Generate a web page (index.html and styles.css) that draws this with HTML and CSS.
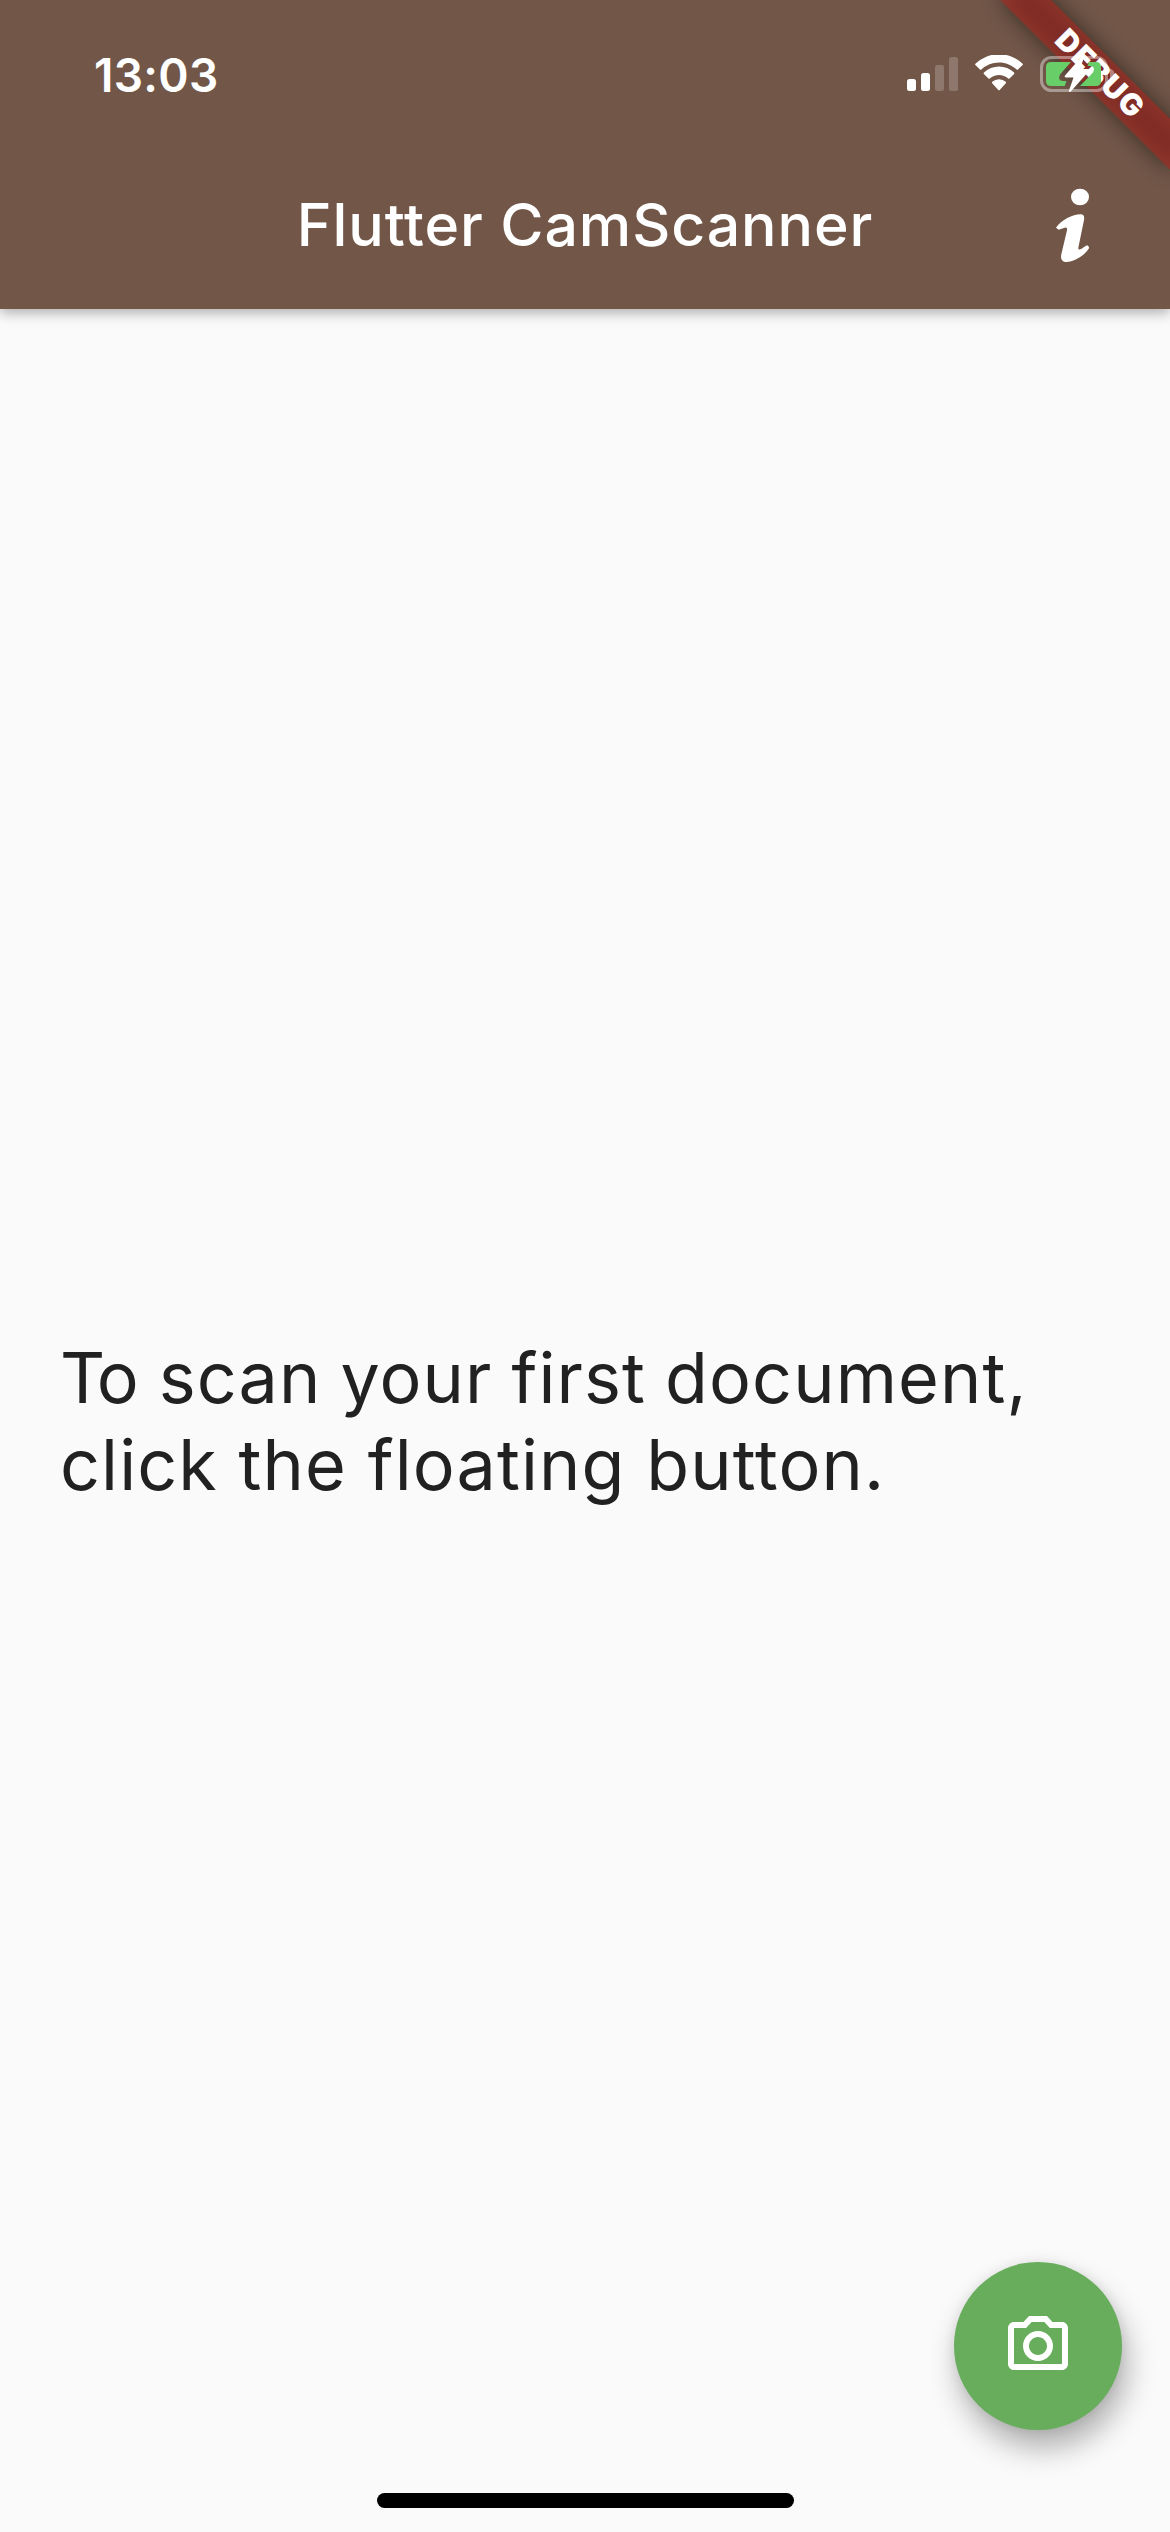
FILE: index.html
```html
<!DOCTYPE html>
<html lang="en">
<head>
<meta charset="utf-8">
<title>Flutter CamScanner</title>
<link rel="stylesheet" href="styles.css">
</head>
<body>
<div class="app">
  <header class="app-bar">
    <div class="status-bar">
      <time class="clock">13:03</time>
      <div class="status-icons">
        <svg class="signal" width="51" height="34" viewBox="0 0 51 34">
          <rect x="0" y="22" width="9" height="12" rx="2.5"/>
          <rect x="14" y="16" width="9" height="18" rx="2.5"/>
          <rect class="dim" x="28" y="8" width="9" height="26" rx="2.5"/>
          <rect class="dim" x="42" y="0" width="9" height="34" rx="2.5"/>
        </svg>
        <svg class="wifi" width="50" height="36" viewBox="0 0 50 36">
          <path d="M25 7.500c6.800 0 13 2.700 17.700 7.100.4.400.9.400 1.300 0l4.600-4.500c.4-.4.4-1 0-1.400A34 34 0 0 0 1.400 8.700c-.4.4-.4 1 0 1.400L6 14.600c.4.400.9.400 1.300 0A26 26 0 0 1 25 7.500Z"/>
          <path d="M25 20c3.500 0 6.700 1.300 9.200 3.500.4.400.9.400 1.300 0l4.600-4.600c.4-.4.4-1 0-1.400a22 22 0 0 0-30.200 0c-.4.4-.4 1 0 1.400l4.600 4.600c.4.400.9.400 1.300 0A14 14 0 0 1 25 20Z"/>
          <path d="M31.800 28.200c.4-.4.4-1 0-1.400a10.500 10.500 0 0 0-13.600 0c-.4.400-.4 1 0 1.400l6.100 6.700c.4.400 1 .400 1.400 0Z"/>
        </svg>
        <svg class="battery" width="76" height="40" viewBox="0 0 76 40">
          <rect class="shell" x="1.500" y="3.500" width="65" height="33" rx="10"/>
          <path class="cap" d="M70 14.500c3 1 4.500 3 4.500 5.500s-1.500 4.500-4.500 5.500Z"/>
          <path class="charge" d="M11 8H31L20 20.500q-3 6.500 3 6.500h3.500l-1.800 5H11q-5 0-5-5V13q0-5 5-5ZM49 8h7q5 0 5 5v14q0 5-5 5H40L53 18.500q3-6.500-3-6.500h-2.500Z"/>
          <path class="bolt" d="M43 1 25 21.500q-1 2 1 2h7.500L29 36.500q0 2.500 1.800 1L49 17q1-2-1-2h-8L44.500 2q0-2.200-1.500-1Z"/>
        </svg>
      </div>
    </div>
    <div class="toolbar">
      <h1 class="title">Flutter CamScanner</h1>
      <button class="info" aria-label="About">
        <svg width="36" height="76" viewBox="15 24 108 228">
          <ellipse cx="90" cy="51" rx="27" ry="25"/>
          <path d="M18 143C35 120 67 103 92 103c9 0 12 6 10 17L85 203q-1 8 6 5c7-3 13-8 20-12q7 3 6 9c-13 22-43 39-67 41-14 0-19-9-16-23l17-72q2-11-7-8l-18 6Z"/>
        </svg>
      </button>
    </div>
  </header>

  <main class="content">
    <p class="hint"><span class="first-line"><span class="tight">T</span>o scan your first document,</span><br>click the floating button.</p>
  </main>

  <button class="fab" aria-label="Scan">
    <svg width="72" height="72" viewBox="0 0 24 24">
      <path d="M14.120 4l1.830 2H20v12H4V6h4.050l1.830-2h4.240M15 2H9L7.170 4H4c-1.100 0-2 .9-2 2v12c0 1.100.9 2 2 2h16c1.100 0 2-.9 2-2V6c0-1.100-.9-2-2-2h-3.170L15 2zm-3 7c1.650 0 3 1.350 3 3s-1.350 3-3 3-3-1.350-3-3 1.350-3 3-3m0-2c-2.760 0-5 2.240-5 5s2.240 5 5 5 5-2.240 5-5-2.240-5-5-5z"/>
    </svg>
  </button>

  <div class="ribbon-corner">
    <div class="ribbon-shadow"></div>
    <div class="ribbon">DEBUG</div>
  </div>
  <div class="home-indicator"></div>
</div>
</body>
</html>
```
FILE: styles.css
```css
* { box-sizing: border-box; }

body {
  margin: 0;
  background: #fafafa;
  font-family: Inter, "Liberation Sans", sans-serif;
}

button {
  padding: 0;
  border: 0;
  background: none;
}

svg { display: block; }

.app {
  position: relative;
  display: flex;
  flex-direction: column;
  width: 1170px;
  height: 2532px;
  overflow: hidden;
}

.app-bar {
  height: 309px;
  color: #fff;
  background: #725749;
  box-shadow: 0 4px 12px rgba(0, 0, 0, .3);
}

.status-bar {
  display: flex;
  justify-content: space-between;
  height: 141px;
  padding: 54px 54px 0 94px;
}

.clock {
  font-size: 46px;
  font-weight: 600;
  line-height: 42px;
  letter-spacing: .3px;
}

.status-icons {
  position: relative;
  z-index: 3;
  display: flex;
  align-items: flex-start;
}

.status-icons svg { fill: #fff; }

.signal { margin-top: 3px; }
.signal .dim { opacity: .2; }
.wifi { margin: 1px 0 0 16px; }
.battery { margin-left: 16px; }

.battery .shell {
  fill: none;
  stroke: #fff;
  stroke-opacity: .4;
  stroke-width: 3;
}

.battery .cap { fill-opacity: .4; }
.battery .charge { fill: #68ce67; }

.toolbar {
  display: grid;
  grid-template-columns: 168px 1fr 168px;
  align-items: center;
  height: 168px;
}

.title {
  grid-column: 2;
  margin: 0;
  font-size: 59px;
  font-weight: 500;
  line-height: 72px;
  letter-spacing: .9px;
  text-align: center;
  white-space: nowrap;
}

.info {
  display: grid;
  place-items: center;
  padding: 2px 26px 0 0;
}

.info svg { fill: #fff; }

.content {
  flex: 1;
  display: flex;
  align-items: center;
  padding: 0 60px;
}

.hint {
  margin: 0;
  color: #212121;
  font-size: 70px;
  line-height: 87px;
  letter-spacing: 1.1px;
}

.first-line { word-spacing: -1.8px; }
.tight { letter-spacing: -8.5px; }

.fab {
  position: absolute;
  right: 48px;
  bottom: 102px;
  display: grid;
  place-items: center;
  width: 168px;
  height: 168px;
  border-radius: 50%;
  background: #67ad5b;
  box-shadow: 5px 18px 30px rgba(0, 0, 0, .3), 0 0 12px rgba(0, 0, 0, .08);
}

.fab svg { fill: #fff; }

.ribbon-corner {
  position: absolute;
  top: 0;
  right: 0;
  z-index: 2;
  width: 0;
  height: 0;
  transform: rotate(45deg);
}

.ribbon,
.ribbon-shadow {
  position: absolute;
  top: 84px;
  left: -120px;
  width: 240px;
  height: 36px;
}

.ribbon-shadow {
  background: rgba(0, 0, 0, .5);
  filter: blur(12px);
}

.ribbon {
  color: #fff;
  background: rgba(168, 42, 35, .63);
  font-size: 30px;
  font-weight: 900;
  line-height: 35px;
  letter-spacing: 1.5px;
  text-indent: 6px;
  text-align: center;
}

.home-indicator {
  position: absolute;
  bottom: 24px;
  left: 377px;
  width: 417px;
  height: 15px;
  border-radius: 8px;
  background: #000;
}
```
